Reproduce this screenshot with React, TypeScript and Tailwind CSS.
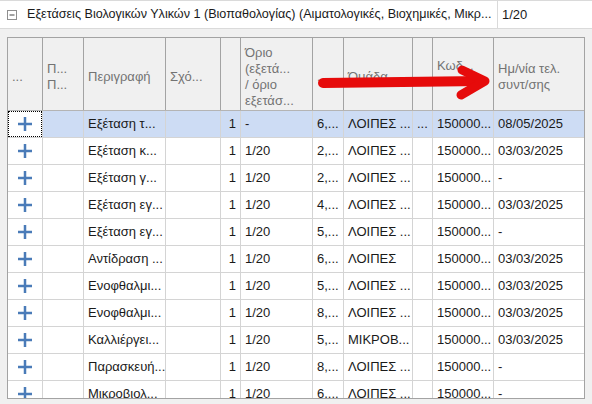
import React from "react";

type Row = {
  desc: string;
  qty: string;
  limit: string;
  price: string;
  group: string;
  extra: string;
  code: string;
  date: string;
};

const rows: Row[] = [
  { desc: "Εξέταση τ...", qty: "1", limit: "-", price: "6,...", group: "ΛΟΙΠΕΣ ...", extra: "...", code: "150000...", date: "08/05/2025" },
  { desc: "Εξέταση κ...", qty: "1", limit: "1/20", price: "2,...", group: "ΛΟΙΠΕΣ ...", extra: "", code: "150000...", date: "03/03/2025" },
  { desc: "Εξέταση γ...", qty: "1", limit: "1/20", price: "2,...", group: "ΛΟΙΠΕΣ ...", extra: "", code: "150000...", date: "-" },
  { desc: "Εξέταση εγ...", qty: "1", limit: "1/20", price: "4,...", group: "ΛΟΙΠΕΣ ...", extra: "", code: "150000...", date: "03/03/2025" },
  { desc: "Εξέταση εγ...", qty: "1", limit: "1/20", price: "5,...", group: "ΛΟΙΠΕΣ ...", extra: "", code: "150000...", date: "-" },
  { desc: "Αντίδραση ...", qty: "1", limit: "1/20", price: "6,...", group: "ΛΟΙΠΕΣ", extra: "", code: "150000...", date: "03/03/2025" },
  { desc: "Ενοφθαλμι...", qty: "1", limit: "1/20", price: "5,...", group: "ΛΟΙΠΕΣ ...", extra: "", code: "150000...", date: "03/03/2025" },
  { desc: "Ενοφθαλμι...", qty: "1", limit: "1/20", price: "8,...", group: "ΛΟΙΠΕΣ ...", extra: "", code: "150000...", date: "03/03/2025" },
  { desc: "Καλλιέργει...", qty: "1", limit: "1/20", price: "5,...", group: "ΜΙΚΡΟΒ...", extra: "", code: "150000...", date: "03/03/2025" },
  { desc: "Παρασκευή...", qty: "1", limit: "1/20", price: "8,...", group: "ΛΟΙΠΕΣ ...", extra: "", code: "150000...", date: "-" },
  { desc: "Μικροβιολ...", qty: "1", limit: "1/20", price: "6,...", group: "ΛΟΙΠΕΣ ...", extra: "", code: "150000...", date: "-" },
];

function Plus() {
  return (
    <svg width="14" height="14" viewBox="0 0 14 14">
      <rect x="0" y="5.75" width="14" height="2.5" fill="#4a7bb8" />
      <rect x="5.75" y="0" width="2.5" height="14" fill="#4a7bb8" />
    </svg>
  );
}

function Collapse() {
  return (
    <svg width="10" height="10" viewBox="0 0 10 10">
      <rect x="0.5" y="0.5" width="9" height="9" fill="#ffffff" stroke="#8f8f8f" />
      <line x1="2.5" y1="5" x2="7.5" y2="5" stroke="#444444" />
    </svg>
  );
}

const dcell = "h-full flex items-center px-[4px] border-r border-[#d4d4d4] overflow-hidden whitespace-nowrap";
const hcell = "h-full flex flex-col justify-center pt-[5px] px-[4px] border-r border-[#a3a3a3] overflow-hidden whitespace-nowrap text-[#737373] leading-[16px]";

export default function App() {
  return (
    <div className="relative w-[592px] h-[404px] bg-[#f0f0f0] overflow-hidden font-['Liberation_Sans',Arial,sans-serif] text-[13px] text-[#1a1a1a]">
      {/* top group row */}
      <div className="flex h-[29px] bg-white border-t border-b border-[#dadada]">
        <div className="w-[498px] flex items-center border-r border-[#dadada] overflow-hidden whitespace-nowrap">
          <div className="pl-[7px] pr-[10px] flex items-center shrink-0">
            <Collapse />
          </div>
          <span className="text-[12.6px] overflow-hidden">Εξετάσεις Βιολογικών Υλικών 1 (Βιοπαθολογίας) (Αιματολογικές, Βιοχημικές, Μικρ...</span>
        </div>
        <div className="flex items-center pl-[4px]">1/20</div>
      </div>

      {/* grid */}
      <div className="mt-[8px] ml-[7px] w-[578px] h-[362px] border border-[#a3a3a3] overflow-hidden">
        {/* header */}
        <div className="flex h-[73px] border-b border-[#b4b4b4] bg-[#f0f0f0]">
          <div className={`${hcell} w-[35px]`}><span>...</span></div>
          <div className={`${hcell} w-[41px]`}><span>Π...</span><span>Π...</span></div>
          <div className={`${hcell} w-[82px]`}><span>Περιγραφή</span></div>
          <div className={`${hcell} w-[55px]`}><span>Σχό...</span></div>
          <div className={`${hcell} w-[20px]`}></div>
          <div className={`${hcell} w-[72px]`}>
            <span>Όριο</span>
            <span>(εξετά...</span>
            <span>/ όριο</span>
            <span>εξετάσ...</span>
          </div>
          <div className={`${hcell} w-[31px]`}><span>...</span></div>
          <div className={`${hcell} w-[69px]`}><span>Όμάδα</span></div>
          <div className={`${hcell} w-[20px]`}></div>
          <div className="h-full flex flex-col justify-center px-[4px] w-[61px] border-r border-[#a3a3a3] overflow-hidden whitespace-nowrap text-[#737373] leading-[16px]">
            <span>Κωδ...</span>
            <span>...</span>
          </div>
          <div className="h-full flex flex-col justify-center pt-[5px] px-[4px] w-[90px] overflow-hidden whitespace-nowrap text-[#737373] leading-[16px]">
            <span>Ημ/νία τελ.</span>
            <span>συντ/σης</span>
          </div>
        </div>

        {/* rows */}
        {rows.map((r, i) => {
          const sel = i === 0;
          const bg = sel ? "bg-[#cddcf4]" : "bg-white";
          return (
            <div key={i} className="flex h-[27px] border-b border-[#d4d4d4]">
              <div className={`${dcell} w-[35px] justify-center bg-white relative`}>
                {sel && <div className="absolute left-0 top-0 right-0 bottom-0 outline-1 outline-dotted outline-black -outline-offset-1" />}
                <Plus />
              </div>
              <div className={`${dcell} w-[41px] ${bg}`}></div>
              <div className={`${dcell} w-[82px] ${bg}`}>{r.desc}</div>
              <div className={`${dcell} w-[55px] ${bg}`}></div>
              <div className={`${dcell} w-[20px] justify-end ${bg}`}>{r.qty}</div>
              <div className={`${dcell} w-[72px] ${bg}`}>{r.limit}</div>
              <div className={`${dcell} w-[31px] ${bg}`}>{r.price}</div>
              <div className={`${dcell} w-[69px] ${bg}`}>{r.group}</div>
              <div className={`${dcell} w-[20px] ${bg}`}>{r.extra}</div>
              <div className={`${dcell} w-[61px] ${bg}`}>{r.code}</div>
              <div className={`h-full flex items-center px-[4px] w-[90px] overflow-hidden whitespace-nowrap ${bg}`}>{r.date}</div>
            </div>
          );
        })}
      </div>

      {/* red annotation arrow */}
      <svg className="absolute left-0 top-0 pointer-events-none" width="592" height="404" viewBox="0 0 592 404">
        <path d="M323 83 L482 81" stroke="#e60b0b" strokeWidth="10" strokeLinecap="round" fill="none" />
        <path d="M462 70 L485 81 L461 95" stroke="#e60b0b" strokeWidth="9" strokeLinecap="round" strokeLinejoin="round" fill="none" />
      </svg>
    </div>
  );
}
